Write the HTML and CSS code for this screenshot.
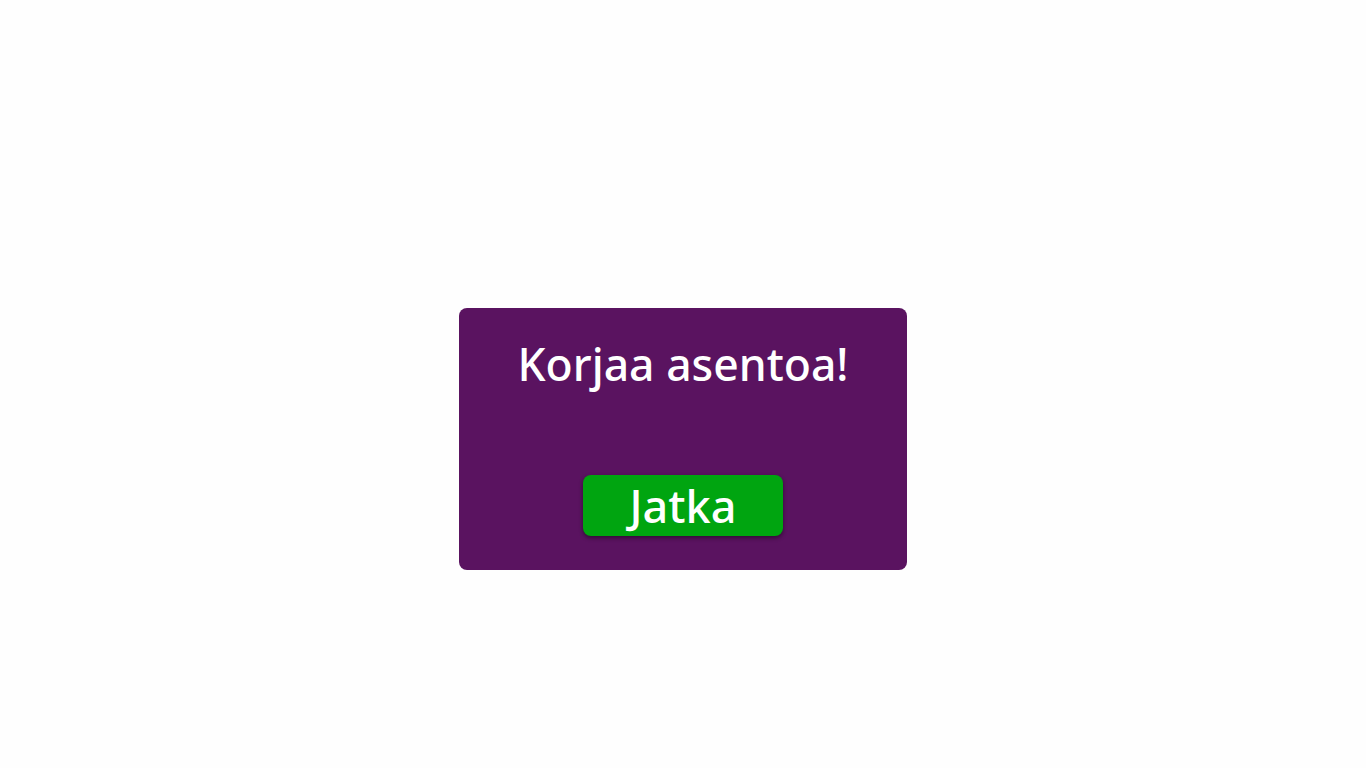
FILE: index.html
```html
<!DOCTYPE html>
<html lang="fi">
<head>
<meta charset="utf-8">
<title>Korjaa asentoa</title>
<link rel="stylesheet" href="styles.css">
</head>
<body>
<div class="stage">
  <div class="dialog">
    <h1 class="title">Korjaa asentoa!</h1>
    <button class="btn">Jatka</button>
  </div>
</div>
</body>
</html>
```
FILE: styles.css
```css
html, body {
  margin: 0;
  padding: 0;
  background: #fefefe;
  font-family: "Noto Sans", "Open Sans", sans-serif;
}
.stage {
  display: flex;
  justify-content: center;
  padding-top: 308px;
}
.dialog {
  width: 448px;
  height: 262px;
  box-sizing: border-box;
  background: #5a1360;
  border-radius: 8px;
  display: flex;
  flex-direction: column;
  align-items: center;
  padding: 26px 0 34px;
}
.title {
  margin: 0;
  color: #ffffff;
  font-size: 44.5px;
  font-weight: 500;
  line-height: 60px;
  flex: 1;
}
.btn {
  width: 200px;
  height: 61px;
  border: none;
  border-radius: 8px;
  background: #00a510;
  color: #ffffff;
  font-family: inherit;
  font-size: 45px;
  font-weight: 500;
  line-height: 61px;
  padding: 0;
  box-shadow: 0 2px 4px rgba(0,0,0,0.45);
}
```
